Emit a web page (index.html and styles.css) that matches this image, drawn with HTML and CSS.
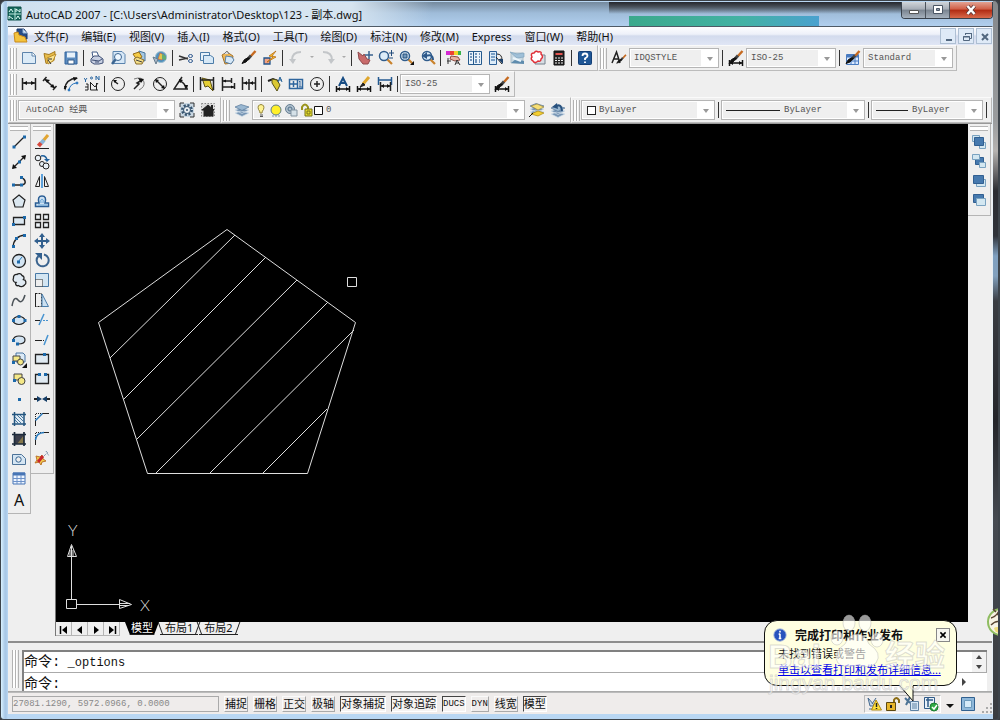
FILE: index.html
```html
<!DOCTYPE html>
<html lang="zh-CN">
<head>
<meta charset="utf-8">
<title>AutoCAD 2007</title>
<link rel="stylesheet" href="styles.css">
</head>
<body>
<svg class="defs" aria-hidden="true">
  <symbol id="brush" viewBox="0 0 16 16"><path d="M14.500 1 10 6" stroke="#c66a20" stroke-width="2.400"/><path d="M10 5.500 6.500 9.500" stroke="#444" stroke-width="3"/><path d="M8.500 8 5 12 1 13.500 3.500 9.500 6.500 8z" fill="#111" stroke="#111"/></symbol>
  <symbol id="dimline" viewBox="0 0 16 16"><path d="M1.500 10v6M14.500 10v6M2 13h12" stroke="#111" stroke-width="1.500"/><path d="M2 13l3-2v4zM14 13l-3-2v4z" fill="#111" stroke="none"/></symbol>
  <symbol id="layers" viewBox="0 0 16 16"><path d="M1 11l6-2 8 2-7 3.500zM1 8l6-2 8 2-7 3.500z" fill="#7896b5" stroke="#d5e2ee" stroke-width=".7"/><path d="M1 5l6-2.500 8 2.500-7 3.500z" fill="#99b7d1" stroke="#59789a" stroke-width=".7"/></symbol>
  <symbol id="lens" viewBox="0 0 16 16"><path d="M9.500 9.500 14 14" stroke="#c9822c" stroke-width="2.200"/><circle cx="6" cy="6" r="4.500" fill="#dcecf8" stroke="#315d8c" stroke-width="1.500"/></symbol>
</svg>
<div class="window">
  <header class="titlebar">
    <svg class="i" viewBox="0 0 16 16"><path d="M1 1h13v13H1z" fill="#16675c" stroke="#0c514b"/><path d="M2 8h12M8 2v12" stroke="#b9e7dc"/><path d="M2 6 4 3l2 3M9 6V3l4 3V3M2 13v-3l4 3M9 13l2-3 2 3" stroke="#e5fff9"/></svg>
    <h1>AutoCAD 2007 - [C:\Users\Administrator\Desktop\123 - 副本.dwg]</h1>
    <div class="winbtns">
      <button aria-label="最小化"><svg class="i" viewBox="0 0 16 16"><path d="M3.500 8.500h9v3h-9z" fill="#fff" stroke="#555"/></svg></button>
      <button aria-label="最大化"><svg class="i" viewBox="0 0 16 16"><path d="M3.500 3.500h9v8h-9z" fill="#fff" stroke="#4b5665"/><path d="M6.500 6.500h3v2h-3z" fill="#8b97a8" stroke="#4b5665"/></svg></button>
      <button class="close" aria-label="关闭"><svg class="i" viewBox="0 0 16 16"><path d="M4.500 4l7 8M11.500 4l-7 8" stroke="#5b3a3a" stroke-width="4"/><path d="M4.500 4l7 8M11.500 4l-7 8" stroke="#fff" stroke-width="2.400"/></svg></button>
    </div>
  </header>
  <div class="client">
    <nav class="menubar">
      <svg class="i" viewBox="0 0 16 16"><path d="M4 1h7l3 4v6H4z" fill="#274c86" stroke="#1a396d"/><path d="M10 1v4h4" fill="#d9e9fa" stroke="#8fb1d6"/><path d="M1 5l4-1 1 3 6 2 2 5H2z" fill="#f4c33d" stroke="#c98a1d"/></svg>
      <button>文件(F)</button><button>编辑(E)</button><button>视图(V)</button><button>插入(I)</button><button>格式(O)</button><button>工具(T)</button><button>绘图(D)</button><button>标注(N)</button><button>修改(M)</button><button>Express</button><button>窗口(W)</button><button>帮助(H)</button>
      <div class="mdi">
        <button aria-label="最小化文档"><svg class="i" viewBox="0 0 16 16"><path d="M5 11h6" stroke="#52677f" stroke-width="2"/></svg></button>
        <button aria-label="还原文档"><svg class="i" viewBox="0 0 16 16"><path d="M6.500 6V4.500h6v5H11M6 4.500h7M4.500 7.500h6v4h-6zM4 8h7" stroke="#52677f"/></svg></button>
        <button aria-label="关闭文档"><svg class="i" viewBox="0 0 16 16"><path d="M5 5l6 6M11 5l-6 6" stroke="#52677f" stroke-width="2"/></svg></button>
      </div>
    </nav>

    <div class="row">
      <div class="bar">
        <span class="grip"></span>
        <button class="tool" aria-label="新建"><svg class="i" viewBox="0 0 16 16"><path d="M1.500 2.500h10l3 3v8h-13z" fill="#dcebf7" stroke="#5e84ab"/><path d="M11 2.500v3.500h3.500" fill="#fff" stroke="#5e84ab"/></svg></button>
        <button class="tool" aria-label="打开"><svg class="i" viewBox="0 0 16 16"><path d="M2 3.500l5 1 6-3-1 9-8 3z" fill="#e9bd4a" stroke="#a57a20"/><path d="M5 8l9-4-3 7-5 3z" fill="#fbe594" stroke="#b98c29"/><path d="M6 10l3 4M6 9h4" stroke="#333"/></svg></button>
        <button class="tool" aria-label="保存"><svg class="i" viewBox="0 0 16 16"><path d="M2 2h12v12H2z" fill="#5c8cc0" stroke="#30639c"/><path d="M4 2.500h8v5H4z" fill="#e7f1fa" stroke="none"/><path d="M5 10h6v4H5z" fill="#fff" stroke="#375f8c"/></svg></button>
        <span class="sep"></span>
        <button class="tool" aria-label="打印"><svg class="i" viewBox="0 0 16 16"><path d="M4 7 3 2h5l2 5" fill="#fff" stroke="#405a87"/><path d="M2 9l3-3h5l4 3v4l-4 1H5l-3-2z" fill="#c8d0e2" stroke="#415176"/><path d="M3 10l7 1 3-2M6 12h4" stroke="#415176"/></svg></button>
        <button class="tool" aria-label="打印预览"><svg class="i" viewBox="0 0 16 16"><path d="M3 1.500h9l3 3v9H3z" fill="#d7e8f7" stroke="#5a83ad"/><circle cx="8" cy="7" r="3.500" fill="#eef7ff" stroke="#3c6591"/><path d="M5.500 9.500 2 14" stroke="#3c6591" stroke-width="2.500"/></svg></button>
        <button class="tool" aria-label="发布"><svg class="i" viewBox="0 0 16 16"><path d="M8 1l6 2v8l-6-2z" fill="#a5c7e2" stroke="#48759b"/><path d="M2 4l6-2 3 5-5 3z" fill="#f6cc45" stroke="#946b18"/><path d="M3 9l3-2 7 3-2 4H5z" fill="#f3dd87" stroke="#8a6c2b"/><path d="M5 10l6 2" stroke="#444"/></svg></button>
        <button class="tool" aria-label="三维 DWF"><svg class="i" viewBox="0 0 16 16"><circle cx="9" cy="7" r="5.500" fill="#4d91bd" stroke="#9cbacd"/><path d="M8 3l4 2-2 5-4-1z" fill="#e3c34d" stroke="#d25a40" stroke-width=".6"/><path d="M10 4l4 2v4l-4-1z" fill="#65ae73" stroke="none"/><path d="M1 7l5 2-2 5z" fill="#aab9c9" stroke="#667b8c"/></svg></button>
        <span class="sep"></span>
        <button class="tool" aria-label="剪切"><svg class="i" viewBox="0 0 16 16"><path d="M1 6l9 3M1 10l9-2" stroke="#333" stroke-width="1.500"/><ellipse cx="12.500" cy="6" rx="2" ry="1.500" stroke="#315a90"/><ellipse cx="12.500" cy="11" rx="2" ry="1.500" stroke="#315a90"/></svg></button>
        <button class="tool" aria-label="复制"><svg class="i" viewBox="0 0 16 16"><path d="M1.500 2.500h9v8h-9z" fill="#e6f1fa" stroke="#4c7ca8"/><path d="M4.500 5.500h7l3 2v6h-10z" fill="#d6e8f6" stroke="#4c7ca8"/></svg></button>
        <button class="tool" aria-label="粘贴"><svg class="i" viewBox="0 0 16 16"><path d="M2 5l5-3 6 4-1 7-7 1z" fill="#f0b755" stroke="#a5742c"/><path d="M6 6l6 1 2 3-3 4-6-2z" fill="#d6e8f7" stroke="#577fa6"/><path d="M4 4l3-3 2 3" fill="#ddd" stroke="#777"/></svg></button>
        <button class="tool" aria-label="特性匹配"><svg class="i"><use href="#brush"/></svg></button>
        <button class="tool" aria-label="块编辑器"><svg class="i" viewBox="0 0 16 16"><path d="M2 8h6v6H2z" fill="#f3a386" stroke="#24558b" stroke-width="1.300"/><path d="M14 1 7 6l4 1-6 5 9-5-4-1z" fill="#ffc329" stroke="#b66c15" stroke-width=".8"/></svg></button>
        <span class="sep"></span>
        <button class="tool" aria-label="放弃"><svg class="i" viewBox="0 0 16 16"><path d="M13 2C6 2 4 6 4 10" stroke="#c3c6c9" stroke-width="2"/><path d="M1 9h7l-3 5z" fill="#c3c6c9" stroke="none"/></svg></button>
        <span class="mini"></span>
        <button class="tool" aria-label="重做"><svg class="i" viewBox="0 0 16 16"><path d="M3 2c7 0 9 4 9 8" stroke="#c3c6c9" stroke-width="2"/><path d="M8 9h7l-4 5z" fill="#c3c6c9" stroke="none"/></svg></button>
        <span class="mini"></span>
        <span class="sep"></span>
        <button class="tool" aria-label="平移"><svg class="i" viewBox="0 0 16 16"><path d="M1 2l5 4 1-2 3 5 3 1-2 4H6L2 9z" fill="#c96b6b" stroke="#8e4a4d"/><path d="M12 1v8M8 5h8" stroke="#3b638e" stroke-width="1.500"/></svg></button>
        <button class="tool" aria-label="实时缩放"><svg class="i" viewBox="0 0 16 16"><use href="#lens"/><path d="M13.500 0v6M11 3h5M11 8h4" stroke="#234d7c"/></svg></button>
        <button class="tool" aria-label="窗口缩放"><svg class="i" viewBox="0 0 16 16"><use href="#lens"/><path d="M4 4h4v4H4z" fill="#7199be" stroke="#274e7a"/><path d="M15 11v4h-4z" fill="#111" stroke="none"/></svg></button>
        <button class="tool" aria-label="缩放上一个"><svg class="i" viewBox="0 0 16 16"><use href="#lens" x="1"/><path d="M13 10C13 4 9 5 5 6" stroke="#2c588a" stroke-width="2"/><path d="M2 6l5-4v7z" fill="#2c588a" stroke="none"/></svg></button>
        <span class="sep"></span>
        <button class="tool" aria-label="特性"><svg class="i" viewBox="0 0 16 16"><path d="M0 1h4v4H0z" fill="#d52ad2" stroke="none"/><path d="M4 1h4v4H4z" fill="#ec4034" stroke="none"/><path d="M8 1h4v4H8z" fill="#f4d227" stroke="none"/><path d="M12 1h3v4h-3z" fill="#38b34a" stroke="none"/><path d="M5 6l7 1 2 3-5 1-5-2z" fill="#e8b3a2" stroke="#8d4a42"/><path d="M2 8v6M1 11h4M9 15l2-5 3 5M10 13h3" stroke="#333"/></svg></button>
        <button class="tool" aria-label="设计中心"><svg class="i" viewBox="0 0 16 16"><path d="M1.500 1.500h13v13h-13z" fill="#e9f2fa" stroke="#255a8d"/><path d="M6.500 2v12" stroke="#255a8d"/><path d="M3 4h2M3 7h2M3 10h2M8 4h2M12 4h1M8 7h2M12 7h1M8 10h2M12 10h1M8 12h2M12 12h1" stroke="#4a76a5" stroke-width="1.500"/></svg></button>
        <button class="tool" aria-label="工具选项板"><svg class="i" viewBox="0 0 16 16"><path d="M1.500 1.500h7v13h-7z" fill="#ddecf8" stroke="#2c5f96"/><path d="M3 4h4M3 7h4M3 10h4" stroke="#5a86b5" stroke-width="1.500"/><path d="M9 4q5 0 5 6l-2-1M8 7l6 7" stroke="#222"/><path d="M10 9h5v5z" fill="#1e426b" stroke="none"/></svg></button>
        <button class="tool" aria-label="图纸集管理器"><svg class="i" viewBox="0 0 16 16"><path d="M2 3h12v10H2z" fill="#c7d8e2" stroke="#aebfc8"/><path d="M1 2l7 2 7-1v4L8 8z" fill="#9fc0d8" stroke="#7fa3bd" stroke-width=".7"/><path d="M2 13l5-4 8 2v3z" fill="#5f8cae" stroke="none"/><path d="M4 8l8 3" stroke="#eaf5fb" stroke-width="2"/></svg></button>
        <button class="tool" aria-label="标记集管理器"><svg class="i" viewBox="0 0 16 16"><path d="M5 5h10v9H5z" fill="#d7dde3" stroke="#77828e"/><path d="M3 11q-3-2-1-4-2-4 2-4 2-3 4-1 4-1 3 2 3 3 0 5 0 3-3 2-3 3-5 0z" fill="#fff" stroke="#e02f37" stroke-width="1.500"/></svg></button>
        <button class="tool" aria-label="快速计算器"><svg class="i" viewBox="0 0 16 16"><path d="M3 1h10v14H3z" fill="#222" stroke="#111"/><path d="M4.500 3h7v2h-7z" fill="#e35450" stroke="none"/><path d="M4 8h2M7 8h2M10 8h2M4 10.500h2M7 10.500h2M10 10.500h2M4 13h2M7 13h2M10 13h2" stroke="#eee"/></svg></button>
        <span class="sep"></span>
        <button class="tool" aria-label="帮助"><svg class="i" viewBox="0 0 16 16"><rect x="1.500" y="1.500" width="13" height="13" rx="1" fill="#1f5695" stroke="#143f76"/><path d="M5.500 6q0-2.500 2.500-2.500T10.500 6q0 1-2.500 2.500V10M8 11.500V13" stroke="#fff" stroke-width="1.800"/></svg></button>
      </div>
      <div class="bar">
        <span class="grip"></span>
        <button class="tool" aria-label="文字样式"><svg class="i" viewBox="0 0 16 16"><path d="M1 13 5.500 2l3.500 11M3 9h5" stroke="#222" stroke-width="1.500"/><use href="#brush" x="5" y="4" width="11" height="11"/></svg></button>
        <label class="combo w90"><select aria-label="文字样式"><option>IDQSTYLE</option></select></label>
        <span class="sep"></span>
        <button class="tool" aria-label="标注样式"><svg class="i" viewBox="0 0 16 16"><use href="#dimline"/><use href="#brush"/></svg></button>
        <label class="combo w90"><select aria-label="标注样式"><option>ISO-25</option></select></label>
        <span class="sep"></span>
        <button class="tool" aria-label="表格样式"><svg class="i" viewBox="0 0 16 16"><path d="M1.500 4.500h12v10h-12z" fill="#d9e9ff" stroke="#497bc0"/><path d="M2 6h11" stroke="#497bc0" stroke-width="3"/><path d="M2 11h11M6 5v9M10 5v9" stroke="#497bc0"/><use href="#brush"/></svg></button>
        <label class="combo w90"><select aria-label="表格样式"><option>Standard</option></select></label>
      </div>
    </div>

    <div class="row">
      <div class="bar">
        <span class="grip"></span>
        <button class="tool" aria-label="线性"><svg class="i" viewBox="0 0 16 16"><path d="M1.500 2v12M14.500 2v12M2 7h12" stroke-width="1.500"/><path d="M2 7l4-2v4zM14 7l-4-2v4z" fill="#111" stroke="none"/></svg></button>
        <button class="tool" aria-label="对齐"><svg class="i" viewBox="0 0 16 16"><path d="M4.500 1 1 5M14.500 10 11 14M3 3.500l9.500 8.500" stroke-width="1.500"/><path d="M3 3l5 1-3 3zM13 12l-5-1 3-3z" fill="#111" stroke="none"/></svg></button>
        <button class="tool" aria-label="弧长"><svg class="i" viewBox="0 0 16 16"><path d="M1.500 13Q3 3 14 2" stroke-width="1.500"/><path d="M1 10h3l-2 5zM10 1l5 1-4 3z" fill="#111" stroke="none"/><path d="M6 14Q7 8 13 7" stroke="#2874bd"/><circle cx="6" cy="14" r="1" fill="#2874bd" stroke="#2874bd"/><circle cx="14" cy="7" r="1" fill="#2874bd" stroke="#2874bd"/></svg></button>
        <button class="tool" aria-label="坐标"><svg class="i" viewBox="0 0 16 16"><path d="M2 8h2v6M1 11h3M1 14h3M6.500 6v8H14M7 7l4 4 3-4M12.500 7v7"/><path d="M0 2l1.500 2L3 2M1.500 4v2M12 0v4M12 0l3 4M15 0v4" stroke="#2664a0"/><circle cx="7.500" cy="2" r="1" stroke="#2664a0"/></svg></button>
        <span class="sep"></span>
        <button class="tool" aria-label="半径"><svg class="i" viewBox="0 0 16 16"><circle cx="8" cy="8" r="6.500"/><path d="M8 8 4 5" stroke-width="1.500"/><path d="M3 4l4 0-2 3z" fill="#111" stroke="none"/></svg></button>
        <button class="tool" aria-label="折弯"><svg class="i" viewBox="0 0 16 16"><path d="M3 3q8-3 10 3 1 5-5 8" stroke="#777"/><path d="M3 13l5-5-2-1 5-3" stroke-width="1.500"/><path d="M7 2l6 1-3 4z" fill="#111" stroke="none"/></svg></button>
        <button class="tool" aria-label="直径"><svg class="i" viewBox="0 0 16 16"><circle cx="8" cy="8" r="6.500"/><path d="M4 4l8 8" stroke-width="1.500"/><path d="M3 3l4 1-3 3zM13 13l-4-1 3-3z" fill="#111" stroke="none"/></svg></button>
        <button class="tool" aria-label="角度"><svg class="i" viewBox="0 0 16 16"><path d="M9 1 1 13h14M6 5q6 1 7 8" stroke-width="1.500"/><path d="M6 3l4 1-3 3zM11 9h4l-1 4z" fill="#111" stroke="none"/></svg></button>
        <span class="sep"></span>
        <button class="tool" aria-label="快速标注"><svg class="i" viewBox="0 0 16 16"><path d="M3 2l8 2 3 11-5-5-3 1z" fill="#e5ce35" stroke="#5d5114"/><path d="M1.500 1v13M14.500 1v13M2 4h12" stroke-width="1.500"/></svg></button>
        <button class="tool" aria-label="基线"><svg class="i" viewBox="0 0 16 16"><path d="M2.500 1v14M11.500 2v5M14.500 7v6M3 5h8M3 11h11" stroke-width="1.500"/><path d="M3 5l3-1.500v3zM14 11l-3-1.500v3z" fill="#111" stroke="none"/></svg></button>
        <button class="tool" aria-label="连续"><svg class="i" viewBox="0 0 16 16"><path d="M1.500 1v13M8 3v11M14.500 1v13M2 7h12" stroke-width="1.500"/><path d="M3 7l3-2v4zM9 7l3-2v4z" fill="#111" stroke="none"/></svg></button>
        <span class="sep"></span>
        <button class="tool" aria-label="快速引线"><svg class="i" viewBox="0 0 16 16"><path d="M1 5l5-2 5 2" stroke-width="2"/><path d="M5 3l5 1 3 5-3 6-5-8z" fill="#dac832" stroke="#55501a"/><path d="M11 6l2-5 2 5M12 4h3" stroke="#246197"/></svg></button>
        <button class="tool" aria-label="公差"><svg class="i" viewBox="0 0 16 16"><path d="M1.500 3.500h13v9h-13zM9.500 4v8M5.500 5v6M2 8h7" stroke="#2e659d" stroke-width="1.500"/><path d="M11 6l1-1v6M11 11h3" stroke="#2e659d"/></svg></button>
        <button class="tool" aria-label="圆心标记"><svg class="i" viewBox="0 0 16 16"><circle cx="8" cy="8" r="6.500"/><path d="M8 5v6M5 8h6" stroke-width="1.500"/></svg></button>
        <span class="sep"></span>
        <button class="tool" aria-label="编辑标注"><svg class="i" viewBox="0 0 16 16"><path d="M4 10 8 2l4 8M6 7h4" stroke="#174c83" stroke-width="2"/><use href="#dimline"/></svg></button>
        <button class="tool" aria-label="编辑标注文字"><svg class="i" viewBox="0 0 16 16"><path d="M13 1 7 8" stroke="#dfa72d" stroke-width="3"/><path d="M7 7l-3 4 5-2z" fill="#222" stroke="#222"/><use href="#dimline"/></svg></button>
        <button class="tool" aria-label="标注更新"><svg class="i" viewBox="0 0 16 16"><path d="M1.500 1v8M14.500 1v8M2 4h12" stroke="#245a91" stroke-width="1.500"/><path d="M3.500 6v9M13.500 6v9M4 10h9" stroke-width="1.500"/><path d="M4 10l3-2v4zM13 10l-3-2v4z" fill="#111" stroke="none"/></svg></button>
        <span class="sep"></span>
        <label class="combo w90"><select aria-label="标注样式控制"><option>ISO-25</option></select></label>
        <button class="tool" aria-label="标注样式管理"><svg class="i" viewBox="0 0 16 16"><use href="#dimline"/><use href="#brush"/></svg></button>
      </div>
    </div>

    <div class="row">
      <div class="bar">
        <span class="grip"></span>
        <label class="combo w157"><select aria-label="工作空间"><option>AutoCAD 经典</option></select></label>
        <button class="tool" aria-label="工作空间设置"><svg class="i" viewBox="0 0 16 16"><path d="M1 1h14v14H1z" fill="#c9d7e2" stroke="none"/><path d="M1 5V1h4M11 1h4v4M15 11v4h-4M5 15H1v-4" stroke="#333"/><circle cx="8" cy="8" r="4.500" stroke="#35536f" stroke-width="3" stroke-dasharray="2 1.500"/><circle cx="8" cy="8" r="3.500" fill="#e9eef2" stroke="#35536f"/><circle cx="8" cy="8" r="1" fill="#35536f" stroke="none"/></svg></button>
        <button class="tool" aria-label="我的工作空间"><svg class="i" viewBox="0 0 16 16"><path d="M1.500 1.500h13v13h-13z" fill="#ddd" stroke="#888" stroke-dasharray="1.500 1.500"/><path d="M2 8l6-5 6 5h-1v6H4V8z" fill="#222" stroke="#222"/><path d="M12 3v4" stroke="#222" stroke-width="2"/></svg></button>
      </div>
      <div class="bar grow">
        <span class="grip"></span>
        <button class="tool" aria-label="图层特性管理器"><svg class="i"><use href="#layers"/></svg></button>
        <label class="combo grow">
          <svg class="layerstate" viewBox="0 0 76 16"><path d="M6 11q0-2-1.500-3.500Q3 3 7 2.500 11 3 9.500 7.500 8 9 8 11z" fill="#fff391" stroke="#92843a"/><path d="M6 13h3M6 14.500h3" stroke="#555"/><circle cx="22" cy="8" r="5" fill="#fff02a" stroke="#5b7b8b"/><path d="M18 14h8" stroke="#7b98ab" stroke-dasharray="2 1"/><circle cx="36" cy="7" r="4.500" fill="#aebfcc" stroke="#687f93"/><circle cx="36" cy="7" r="2" stroke="#52718b"/><path d="M37 8h6v6h-6z" fill="#d5e1e8" stroke="#8293a0"/><path d="M48 8V5q3-5 6 0v5" stroke="#9a941d" stroke-width="2"/><path d="M51 7h7v7h-7z" fill="#e9df30" stroke="#77721b"/><path d="M53 9h3v3h-3z" stroke="#77721b"/><path d="M60.500 4.500h8v8h-8z" fill="#fff" stroke="#111"/></svg>
          <select aria-label="图层"><option>0</option></select></label>
        <button class="tool" aria-label="置为当前图层"><svg class="i" viewBox="0 0 16 16"><use href="#layers" y="-1"/><path d="M2 12l7 2 6-3-6-2z" fill="#f4cf30" stroke="#aa8713" stroke-width=".7"/><path d="M0 15l4-4" stroke="#111"/><path d="M2 4l6-2 7 3-6 3z" fill="#f6df75" stroke="#9a8744" stroke-width=".7"/></svg></button>
        <button class="tool" aria-label="上一个图层"><svg class="i" viewBox="0 0 16 16"><use href="#layers" y="1"/><path d="M5 5q6-5 7 4" stroke="#28517e" stroke-width="2"/><path d="M2 5l5-4 1 6z" fill="#28517e" stroke="none"/></svg></button>
      </div>
      <div class="bar">
        <span class="grip"></span>
        <label class="combo w134"><span class="swatch"></span><select aria-label="颜色"><option>ByLayer</option></select></label>
        <span class="sep"></span>
        <label class="combo w144"><span class="ltype"></span><select aria-label="线型"><option>ByLayer</option></select></label>
        <span class="sep"></span>
        <label class="combo w112"><span class="ltype short"></span><select aria-label="线宽"><option>ByLayer</option></select></label>
        <span class="sep"></span>
      </div>
    </div>

    <main class="work">
      <div class="vbar long">
        <span class="hgrip"></span>
        <button class="tool" aria-label="直线"><svg class="i" viewBox="0 0 16 16"><path d="M3 13 13 3" stroke-width="1.300"/><path class="n" d="M1.500 11.500h3v3h-3zM12 1.500h3v3h-3z"/></svg></button>
        <button class="tool" aria-label="构造线"><svg class="i" viewBox="0 0 16 16"><path d="M2 14 14 2" stroke-width="1.300"/><path d="M1 15l1-5 4 4zM15 1l-1 5-4-4z" fill="#111" stroke="none"/><path class="n" d="M7 6.500h3v3H7z"/></svg></button>
        <button class="tool" aria-label="多段线"><svg class="i" viewBox="0 0 16 16"><path d="M2 12h9q4-1 3-4-1-3-4-3" stroke-width="1.500"/><path class="n" d="M1 10.500h3v3H1zM9 10.500h3v3H9zM9 3h3v3H9z"/></svg></button>
        <button class="tool" aria-label="正多边形"><svg class="i" viewBox="0 0 16 16"><path d="M8 2l6 5-2 7H4L2 7z" fill="#dbe7f0" stroke-width="1.200"/></svg></button>
        <button class="tool" aria-label="矩形"><svg class="i" viewBox="0 0 16 16"><path d="M2.500 4.500h11v7h-11z" fill="#dbe7f0" stroke-width="1.300"/><path class="n" d="M1 10h3v3H1zM12 3h3v3h-3z"/></svg></button>
        <button class="tool" aria-label="圆弧"><svg class="i" viewBox="0 0 16 16"><path d="M2 14Q3 3 14 2" stroke-width="1.300"/><path class="n" d="M1 12h3v3H1zM4 4h3v3H4zM12 1h3v3h-3z"/></svg></button>
        <button class="tool" aria-label="圆"><svg class="i" viewBox="0 0 16 16"><circle cx="8" cy="8" r="6.500" fill="#d3e4f2" stroke-width="1.300"/><path d="M7 9l4-5" stroke="#217abe"/><path class="n" d="M6 7.500h3v3H6z"/></svg></button>
        <button class="tool" aria-label="修订云线"><svg class="i" viewBox="0 0 16 16"><path d="M5 10.500A3 3 0 0 1 2.500 6 3 3 0 0 1 6 2.500a3 3 0 0 1 5 1 2.500 2.500 0 0 1 1.500 4 3 3 0 0 1 1 5.500 4 4 0 0 1-6 .5 2 2 0 0 1-2.500-3z" fill="#dfe9f2" stroke-width="1.300"/></svg></button>
        <button class="tool" aria-label="样条曲线"><svg class="i" viewBox="0 0 16 16"><path d="M1 14Q3 3 7 8t7-5" stroke="#4b5258" stroke-width="1.500"/></svg></button>
        <button class="tool" aria-label="椭圆"><svg class="i" viewBox="0 0 16 16"><ellipse cx="8" cy="8.500" rx="6" ry="4" fill="#d3e4f2" stroke-width="1.200"/><path class="n" d="M1 7h3v3H1zM6.500 3h3v3h-3zM12.500 7h3v3h-3z"/></svg></button>
        <button class="tool" aria-label="椭圆弧"><svg class="i" viewBox="0 0 16 16"><path d="M2 8q1-4 6-4 6 0 6 4t-7 4" fill="#d3e4f2" stroke-width="1.200"/><path class="n" d="M1 7h3v3H1zM5 10.500h3v3H5z"/></svg></button>
        <button class="tool" aria-label="插入块"><svg class="i" viewBox="0 0 16 16"><path d="M5 1h7l2 2v7H5z" fill="#dceaf6" stroke="#4b77a4"/><path d="M2 4h7v5H2z" fill="#f4e887" stroke="#444"/><circle cx="9.500" cy="10" r="3" fill="#f4e887" stroke="#444"/><path class="n" d="M1 9h3v3H1z"/><path d="M16 11v5h-5z" fill="#111" stroke="none"/></svg></button>
        <button class="tool" aria-label="创建块"><svg class="i" viewBox="0 0 16 16"><path d="M3 3h8v6H3z" fill="#f4e887" stroke="#444"/><circle cx="10.500" cy="10" r="3.500" fill="#f4e887" stroke="#444"/><path class="n" d="M2 8h3v3H2z"/></svg></button>
        <button class="tool" aria-label="点"><svg class="i" viewBox="0 0 16 16"><path class="n" d="M7 7h3v3H7z"/></svg></button>
        <button class="tool" aria-label="图案填充"><svg class="i" viewBox="0 0 16 16"><path d="M4 4h9v9H4z" fill="#e0ebf4" stroke="none"/><path d="M3.500 1v14M13 1v14M1 3.500h14M1 13h14" stroke="#24567f" stroke-width="1.500"/><path d="M4 6l7 7M4 9l4 4M6 4l7 7M9 4l4 4" stroke="#47779c"/></svg></button>
        <button class="tool" aria-label="渐变色"><svg class="i" viewBox="0 0 16 16"><path d="M4 4h9v9H4z" fill="#3c3f4c" stroke="none"/><path d="M6 13l7-9v9z" fill="#85784c" stroke="none"/><path d="M3.500 1v14M13 1v14M1 3.500h14M1 13h14" stroke="#1d2b3b" stroke-width="1.700"/></svg></button>
        <button class="tool" aria-label="面域"><svg class="i" viewBox="0 0 16 16"><path d="M1.500 3.500h9l4 4v6h-13z" fill="#d5e5f2" stroke="#4c7298"/><circle cx="7.500" cy="8.500" r="2.700" fill="#eee" stroke="#356493"/></svg></button>
        <button class="tool" aria-label="表格"><svg class="i" viewBox="0 0 16 16"><path d="M2 3h12v11H2z" fill="#eef5ff" stroke="#4775b5"/><path d="M2 4h12" stroke="#4775b5" stroke-width="3"/><path d="M2 8.500h12M2 11.500h12M6 5v9M10 5v9" stroke="#6d91c8"/></svg></button>
        <button class="tool letter">A</button>
      </div>
      <div class="vbar mid">
        <span class="hgrip"></span>
        <button class="tool" aria-label="删除"><svg class="i" viewBox="0 0 16 16"><path d="M14 1 9 7" stroke="#e2a532" stroke-width="3"/><path d="M10 6l-3 3.500" stroke="#8ab5d8" stroke-width="4"/><path d="M7 9l-2.500 3" stroke="#d6483d" stroke-width="4"/><path d="M1 14.500h14"/></svg></button>
        <button class="tool" aria-label="复制对象"><svg class="i" viewBox="0 0 16 16"><circle cx="4" cy="4" r="2.800" fill="#e9f0f6"/><circle cx="8" cy="10" r="2.500" fill="#e9f0f6"/><circle cx="12" cy="12" r="3" fill="#e9f0f6"/><path d="M7 2q5-1 6 4" stroke="#1e5f9b" stroke-width="1.500"/><path d="M10 5h6l-3 3z" fill="#1e5f9b" stroke="none"/></svg></button>
        <button class="tool" aria-label="镜像"><svg class="i" viewBox="0 0 16 16"><path d="M1.500 13.500h4v-10zM14.500 13.500h-4v-10z"/><path d="M8 1v14" stroke="#5da1da" stroke-width="2"/></svg></button>
        <button class="tool" aria-label="偏移"><svg class="i" viewBox="0 0 16 16"><path d="M1.500 13.500h13V10H11q2-7-3-7T5 10H1.500z" fill="#cfe2f2" stroke="#2a5d94" stroke-width="1.500"/><path d="M4 12h9M7 10q-1-4 1-4t1 4" stroke="#67a4d7"/></svg></button>
        <button class="tool" aria-label="阵列"><svg class="i" viewBox="0 0 16 16"><path d="M1.500 1.500h5v5h-5zM9.500 1.500h5v5h-5zM1.500 9.500h5v5h-5zM9.500 9.500h5v5h-5z" fill="#eef3f7" stroke-width="1.300"/></svg></button>
        <button class="tool" aria-label="移动"><svg class="i" viewBox="0 0 16 16"><path d="M8 2v12M2 8h12" stroke="#315f8e" stroke-width="2"/><path d="M8 0l3 4H5zM8 16l3-4H5zM0 8l4-3v6zM16 8l-4-3v6z" fill="#315f8e" stroke="none"/></svg></button>
        <button class="tool" aria-label="旋转"><svg class="i" viewBox="0 0 16 16"><path d="M4.500 4A6 6 0 1 0 10 2.500" stroke="#3a638e" stroke-width="2"/><path d="M1 1h7v7z" fill="#315f8e" stroke="none"/></svg></button>
        <button class="tool" aria-label="缩放"><svg class="i" viewBox="0 0 16 16"><path d="M1.500 1.500h13v13h-13z" fill="#d3e5f2" stroke="#4779a7"/><path d="M1.500 7.500h7v7h-7z" fill="#eee" stroke="#222" stroke-dasharray="1 1"/></svg></button>
        <button class="tool" aria-label="拉伸"><svg class="i" viewBox="0 0 16 16"><path d="M1.500 1.500h6v13h-6z" fill="#eee" stroke-dasharray="2 1"/><path d="M8 2l6.500 12.500H8z" fill="#cde1f1" stroke="#4b7eac"/><path d="M1.500 1v14"/></svg></button>
        <button class="tool" aria-label="修剪"><svg class="i" viewBox="0 0 16 16"><path d="M1 8.500h5"/><path d="M5 13 10 2" stroke="#4793d0" stroke-width="1.500"/><path d="M9 8.500h6" stroke="#4793d0" stroke-dasharray="2 1"/></svg></button>
        <button class="tool" aria-label="延伸"><svg class="i" viewBox="0 0 16 16"><path d="M1 8.500h5"/><path d="M6 8.500h4" stroke-dasharray="2 1"/><path d="M10 13 14 3" stroke="#4793d0" stroke-width="1.500"/></svg></button>
        <button class="tool" aria-label="打断于点"><svg class="i" viewBox="0 0 16 16"><path d="M1.500 3.500h13v9h-13z" fill="#e0eaf2" stroke-width="1.300"/><path class="n" d="M9 2h3v3H9z"/></svg></button>
        <button class="tool" aria-label="打断"><svg class="i" viewBox="0 0 16 16"><path d="M4 3.500H1.500v9h13v-9H12" fill="#e0eaf2" stroke-width="1.300"/><path class="n" d="M4 2h3v3H4zM10 2h3v3h-3z"/></svg></button>
        <button class="tool" aria-label="合并"><svg class="i" viewBox="0 0 16 16"><path d="M0 8h4M12 8h4" stroke-width="2"/><path d="M3 5l5 3-5 3zM13 5 8 8l5 3z" fill="#173f68" stroke="none"/></svg></button>
        <button class="tool" aria-label="倒角"><svg class="i" viewBox="0 0 16 16"><path d="M1.500 15V9M9 2.500h6"/><path d="M1.500 8V2.500H9" stroke-dasharray="1 1"/><path d="M1.500 9.500l7-7" stroke="#2879bb" stroke-width="1.500"/></svg></button>
        <button class="tool" aria-label="圆角"><svg class="i" viewBox="0 0 16 16"><path d="M1.500 15V9M9 2.500h6"/><path d="M1.500 8V2.500H9" stroke-dasharray="1 1"/><path d="M1.500 10Q2 3 10 2.500" stroke="#2879bb" stroke-width="1.500"/></svg></button>
        <button class="tool" aria-label="分解"><svg class="i" viewBox="0 0 16 16"><path d="M2 6l4 1 2-2 1 4 3 2-4 1-1 3-2-3-4 1 2-3z" fill="#f3cf4d" stroke="#bd752c"/><path d="M9 6l-5 6" stroke="#c9272c" stroke-width="3"/><path d="M10 6l4-4M12 1l3 5" stroke="#587798" stroke-dasharray="1 1"/></svg></button>
      </div>
      <div class="document">
        <div class="canvas">
          <svg class="drawing" role="img" aria-label="图案填充的五边形"><path d="M171 105.500 299.500 198.500 251.500 349.500H91.500L42.500 198.500z"/><path d="M179 111 54 234M210 133 68 275M241 156 81 315M272 178 100 349M298 206 154 349M271 285 207 349"/><path d="M291.500 153.500h9v9h-9z"/></svg>
          <svg class="ucs" viewBox="0 -10 110 110"><path d="M10.500 77.500h10v9h-10zM15.500 77V35M21 82.500h43M15.500 22.500l-4 12h9zM63.500 77.500v9l12-4zM15.500 24v10M14 28v6M17 28v6M64 81.500h10M64 83.500h8"/><text x="12" y="14">Y</text><text x="84" y="89">X</text></svg>
        </div>
        <div class="tabs">
          <div class="tabnav">
            <button aria-label="第一个"><svg class="i" viewBox="0 0 16 16"><path d="M4.500 4v8" stroke="#000" stroke-width="1.500"/><path d="M11 4v8L6 8z" fill="#000" stroke="none"/></svg></button>
            <button aria-label="上一个"><svg class="i" viewBox="0 0 16 16"><path d="M10 4v8L5 8z" fill="#000" stroke="none"/></svg></button>
            <button aria-label="下一个"><svg class="i" viewBox="0 0 16 16"><path d="M6 4v8l5-4z" fill="#000" stroke="none"/></svg></button>
            <button aria-label="最后一个"><svg class="i" viewBox="0 0 16 16"><path d="M11.500 4v8" stroke="#000" stroke-width="1.500"/><path d="M5 4v8l5-4z" fill="#000" stroke="none"/></svg></button>
          </div>
          <button class="tab active">模型</button><button class="tab">布局1</button><button class="tab">布局2</button>
        </div>
      </div>
      <aside class="side">
        <div class="vbar order">
          <span class="hgrip"></span>
          <button class="tool" aria-label="前置"><svg class="i" viewBox="0 0 16 16"><path d="M1.500 1.500h7v6h-7zM8.500 8.500h6v6h-6z" fill="#d3e7f1" stroke="#7aa2c0"/><path d="M3.500 3.500h9v8h-9z" fill="#4679ae" stroke="#315f91"/></svg></button>
          <button class="tool" aria-label="后置"><svg class="i" viewBox="0 0 16 16"><path d="M4.500 4.500h8v7h-8z" fill="#4679ae" stroke="#315f91"/><path d="M1.500 1.500h7v5h-7zM8.500 9.500h6v5h-6z" fill="#d3e7f1" stroke="#7aa2c0"/></svg></button>
          <button class="tool" aria-label="置于对象之上"><svg class="i" viewBox="0 0 16 16"><path d="M5.500 6.500h9v7h-9z" fill="#d3e7f1" stroke="#7aa2c0"/><path d="M2.500 2.500h10v8h-10z" fill="#4679ae" stroke="#315f91"/></svg></button>
          <button class="tool" aria-label="置于对象之下"><svg class="i" viewBox="0 0 16 16"><path d="M2.500 2.500h10v8h-10z" fill="#4679ae" stroke="#315f91"/><path d="M5.500 6.500h9v7h-9z" fill="#d3e7f1" stroke="#7aa2c0"/></svg></button>
        </div>
      </aside>
    </main>

    <section class="command">
      <span class="grip"></span>
      <div class="console">
        <div class="line history"><p><span class="cn">命令:</span> _options</p><div class="spin"><button class="up" aria-label="向上"></button><button class="down" aria-label="向下"></button></div></div>
        <div class="line"><label class="cn" for="cmd">命令:</label><input id="cmd" type="text"><button class="right" aria-label="向右"></button></div>
      </div>
    </section>

    <footer class="status">
      <output>27081.1290, 5972.0966, 0.0000</output>
      <button>捕捉</button><button>栅格</button><button>正交</button><button>极轴</button><button class="on">对象捕捉</button><button class="on">对象追踪</button><button class="on mono">DUCS</button><button class="mono">DYN</button><button>线宽</button><button class="on">模型</button>
      <div class="tray">
        <svg class="i" viewBox="0 0 16 16"><path d="M2 2l7 8H4zM3 13h6M6 8l4-6" fill="#c9d8e8" stroke="#43688f"/><path d="M10 4l5.500 10h-10z" fill="#ffe13c" stroke="#b18b16"/><path d="M10.500 7v4M10.500 12v1" stroke-width="1.500"/></svg>
        <svg class="i" viewBox="0 0 16 16"><path d="M9 7V4q2-4 5 0v3" stroke="#8b6c13" stroke-width="2"/><path d="M1.500 6.500h9v8h-9z" fill="#e7b52b" stroke="#5d4810"/><path d="M6 9v3" stroke="#222" stroke-width="2"/></svg>
        <svg class="i" viewBox="0 0 16 16"><path d="M1 2l5 5M6 1 2 9" stroke="#4d7395" stroke-width="2"/><path d="M6.500 5.500h8v9h-8z" fill="#d8e8f5" stroke="#5d81a3"/><path d="M8 8h5M8 10h5M8 12h5" stroke="#5d81a3"/></svg>
        <svg class="i" viewBox="0 0 16 16"><path d="M1.500 1.500h10v11h-10z" fill="#e8f0f8" stroke="#315b88"/><path d="M3 4h7M5 2v9" stroke="#315b88" stroke-width="1.500"/><circle cx="11" cy="11" r="4" fill="#2faa43" stroke="#1c7b30"/><path d="M9 11l2 2 3-4" stroke="#fff" stroke-width="1.500"/></svg>
      </div>
      <button class="drop" aria-label="状态栏菜单"></button>
      <button class="tool" aria-label="全屏显示"><svg class="i" viewBox="0 0 16 16"><path d="M1.500 1.500h13v13h-13z" fill="#8fb8da" stroke="#31608f"/><path d="M4.500 4.500h7v7h-7z" fill="#d5eaf8" stroke="#6c9abc"/></svg></button>
      <svg class="sizer" viewBox="0 0 10 12"><path d="M8 2h2M8 6h2M4 6h2M8 10h2M4 10h2M0 10h2" stroke="#aaa" stroke-width="2"/></svg>
    </footer>
  </div>

  <aside class="balloon">
    <svg class="tail" viewBox="0 0 20 20"><path d="M1 0 14 16 14 0z" fill="#ffffe1" stroke="none"/><path d="M1 1 14 16 14 1" stroke="#111" fill="none"/></svg>
    <header><svg class="i" viewBox="0 0 16 16"><circle cx="8" cy="8" r="7" fill="#2853bd" stroke="#8fa6d8"/><path d="M8 3v2M8 6.500V12M6.500 12h3M6.500 7H8" stroke="#fff" stroke-width="1.800"/></svg><h2>完成打印和作业发布</h2><button aria-label="关闭通知"><svg class="i" viewBox="0 0 16 16"><path d="M4.500 4.500l7 7M11.500 4.500l-7 7" stroke="#000" stroke-width="2"/></svg></button></header>
    <p>未找到错误或警告</p>
    <a href="#report">单击以查看打印和发布详细信息...</a>
  </aside>
  <svg class="mark" viewBox="0 0 184 90"><ellipse cx="82" cy="10" rx="6" ry="8"/><ellipse cx="98" cy="10" rx="6" ry="8"/><ellipse cx="70" cy="25" rx="6" ry="7"/><ellipse cx="110" cy="27" rx="6" ry="7"/><path d="M90 21q8 0 12 10 14 9 7 19-6 6-19 2-13 4-19-2-7-10 7-19 4-10 12-10z"/><text x="1" y="55" class="big">Bai</text><text x="118" y="53" class="cnm">经验</text><text x="2" y="77" class="url">jingyan.baidu.com</text></svg>
  <svg class="pet" viewBox="0 0 14 32"><circle cx="15" cy="17" r="13" fill="#f7f3e3" stroke="#8fbd62" stroke-width="2"/><path d="M5 13q5-1 8-7M5 20q5-5 9-3M7 4l3 3M11 10l3-4" stroke="#5a4632" stroke-width="1.500"/><path d="M8 23q3-2 6 0v5q-5 0-6-5z" fill="#eedb7a" stroke="none"/></svg>
</div>
</body>
</html>
```
FILE: styles.css
```css
* { box-sizing: border-box; }
body { margin: 0; background: #3a3c40; }
.defs { position: absolute; width: 0; height: 0; }
button, select, input { font: inherit; color: inherit; margin: 0; padding: 0; border: 0; background: none; border-radius: 0; }
h1, h2, p { margin: 0; font-weight: normal; }
.i { width: 16px; height: 16px; flex: none; display: block; fill: none; stroke: #222; }
.n { fill: #1c69aa; stroke: none; }

.window {
  position: relative; height: 100vh; display: flex; flex-direction: column;
  padding: 1px 5px 5px 6px; overflow: hidden;
  border: 1px solid #3d444b; border-right-width: 2px; border-radius: 6px 6px 4px 4px;
  background:
    linear-gradient(90deg, #d9f1ff, #a9c8e6 4px, #a9c8e6 5px, transparent 7px) left / 8px 100% no-repeat,
    linear-gradient(#85888b, #9a9c9e 120px, #b6b3b1 150px, #2b2c31 190px, #30333a 235px, #7fa0c0 255px, #82a0bd 275px, #3a3d43 300px, #24252a 420px, #454a51 520px, #393c40) right / 5px 100% no-repeat,
    #b9d7f3;
  font: 11px "Noto Sans", "Noto Sans CJK SC", sans-serif; color: #111;
}
.titlebar {
  height: 24px; flex: none; display: flex; align-items: center; gap: 3px;
  background:
    linear-gradient(90deg, #3ba98c, #43b2a4 60%, #4aa1cf) 622px 14px / 190px 10px no-repeat,
    linear-gradient(#25272d, rgba(60, 65, 72, .8) 5px, rgba(150, 175, 200, 0) 12px) 602px 0 / 600px 12px no-repeat,
    linear-gradient(100deg, #cfe0ef 0, #d8e7f4 120px, #d6e4f0 340px, rgba(160, 190, 220, 0) 420px),
    linear-gradient(#74899d, #9fbcd9 11px, #b1cfee);
}
.titlebar h1 { font-size: 11px; white-space: nowrap; }
.winbtns { margin-left: auto; align-self: flex-start; display: flex; border: 1px solid #39414c; border-top: 0; border-radius: 0 0 4px 4px; overflow: hidden; }
.winbtns button { width: 24px; height: 16px; display: grid; place-items: center; background: linear-gradient(#d0d4d9, #a5acb6 45%, #79838f 50%, #a6b1bd); border-right: 1px solid #4b535d; }
.winbtns .close { width: 42px; border: 0; background: linear-gradient(#e2a393, #cf5d45 45%, #b02a12 50%, #d8694a); }

.client { flex: 1; min-height: 0; display: flex; flex-direction: column; margin-left: 1px; background: #efefef; border-top: 1px solid #4f5a66; border-right: 1px solid #e7eff5; }
.menubar { height: 18px; flex: none; display: flex; align-items: center; gap: 13px; padding-left: 5px; background: linear-gradient(#fdfdff, #eef1f9 40%, #d3dbed 50%, #e0e6f5); }
.menubar > .i { margin-right: -8px; }
.menubar > button { white-space: nowrap; }
.mdi { margin-left: auto; display: flex; gap: 2px; }
.mdi button { width: 16px; height: 16px; display: grid; place-items: center; background: #dfeaf7; border: 1px solid #aebfd3; }

.row { height: 26px; flex: none; display: flex; background: #efefef; }
.bar { display: flex; align-items: center; height: 26px; border: 1px solid #fafafa; border-right: 1px solid #b9b9b9; border-bottom: 1px solid #bcbcbc; padding: 0 2px 0 1px; }
.grow { flex: 1; min-width: 0; }
.grip { width: 7px; height: 21px; flex: none; margin-right: 1px; border: 1px solid #b3b3b3; border-width: 0 1px; background: linear-gradient(90deg, #fff 2px, #b3b3b3 2px, #b3b3b3 3px, #fff 3px, #fff 4px, transparent 4px); }
.tool { width: 21px; height: 19px; flex: none; display: grid; place-items: center; }
.sep { width: 1px; height: 16px; flex: none; margin: 0 2px; background: #333; }
.mini { width: 11px; display: grid; place-items: center; }
.mini::before { content: ""; border: 2px solid transparent; border-top-color: #aaa; }
.combo { height: 20px; display: flex; align-items: center; border: 1px solid #b5b5b5; background: #efefef; box-shadow: inset 0 0 0 1px #fff; position: relative; padding-left: 4px; margin-right: 1px; }
.combo::after { content: ""; position: absolute; right: 1px; top: 1px; bottom: 1px; width: 16px; pointer-events: none; background: #fff; }
.combo::before { content: ""; position: absolute; z-index: 1; right: 5px; top: 8px; border: 3px solid transparent; border-top: 4px solid #999; border-bottom: 0; pointer-events: none; }
.combo select { appearance: none; flex: 1; min-width: 0; height: 18px; color: #555; font: 9px "Liberation Mono", "Noto Sans CJK SC", monospace; }
.w90 { width: 90px; }
.w134 { width: 134px; }
.w144 { width: 144px; }
.w112 { width: 112px; }
.w157 { width: 157px; }
.w157 select { padding-left: 3px; }
.layerstate { width: 76px; height: 16px; flex: none; margin: 0 -4px 0 -3px; fill: none; }
.swatch { width: 9px; height: 9px; margin: 0 3px 0 1px; border: 1px solid #222; background: #fff; }
.ltype { width: 54px; height: 1px; margin-right: 4px; background: #222; }
.ltype.short { width: 32px; }

.work { flex: 1; min-height: 0; display: flex; border-top: 1px solid #999; }
.vbar { width: 23px; padding-bottom: 5px; display: grid; grid-auto-rows: 1fr; grid-template-rows: 8px; justify-items: center; align-items: center; align-self: flex-start; border-right: 1px solid #b5b5b5; border-bottom: 1px solid #b5b5b5; }
.long { height: 390px; }
.mid { height: 350px; margin-right: 1px; }
.order { height: 92px; }
.hgrip { width: 18px; height: 5px; border: 1px solid #b5b5b5; border-width: 1px 0; background: #fff; }
.letter { font: 16px "Noto Sans", sans-serif; }
.document { flex: 1; min-width: 0; display: flex; flex-direction: column; border-left: 1px solid #777; }
.canvas { flex: 1; min-height: 0; position: relative; background: #000; overflow: hidden; }
.canvas svg { fill: none; stroke: #dedede; stroke-width: 1; }
.drawing { width: 100%; height: 100%; display: block; }
.ucs { position: absolute; left: 0; bottom: 0; width: 110px; height: 110px; }
.ucs text { font: 300 16px Lato, sans-serif; fill: #dedede; stroke: none; }
.tabs { height: 14px; flex: none; display: flex; background: #efefef; }
.tabnav { display: flex; margin-right: 5px; }
.tabnav button { width: 16px; height: 14px; display: grid; place-items: center; border-right: 1px solid #b5b5b5; border-bottom: 1px solid #b5b5b5; }
.tab { position: relative; height: 13px; line-height: 12px; padding: 0 5px; margin-right: 1px; border-bottom: 1px solid #222; white-space: nowrap; }
.tab::before, .tab::after { content: ""; position: absolute; top: 0; bottom: -1px; width: 1px; background: #222; }
.tab::before { left: 0; transform: skewX(20deg); }
.tab::after { right: 0; transform: skewX(-20deg); }
.active { padding: 0 6px; background: #000; color: #fff; clip-path: polygon(0 0, 100% 0, calc(100% - 5px) 100%, 5px 100%); }
.side { width: 24px; flex: none; }

.command { flex: none; display: flex; margin-top: 5px; padding: 7px 5px 0 4px; border-top: 2px solid #8d8d8d; border-bottom: 1px solid #aaa; }
.command .grip { height: 38px; margin-right: 3px; }
.console { flex: 1; min-width: 0; border: 2px solid #808080; border-width: 2px 0 0 2px; font: 12px "Liberation Mono", monospace; }
.line { display: flex; align-items: center; height: 18px; background: #fff; }
.history { height: 21px; padding-bottom: 5px; border-bottom: 1px solid #aaa; }
.history p { flex: 1; white-space: pre; }
.cn { font: 14px "Liberation Mono", "Noto Sans CJK SC", monospace; }
.line input { flex: 1; min-width: 0; outline: 0; }
.spin { width: 15px; height: 20px; margin-bottom: -5px; display: flex; flex-direction: column; justify-content: space-around; align-items: center; background: #f2f2f2; border-right: 1px solid #aaa; }
.spin button { border: 3px solid transparent; }
.spin .up { border-bottom: 4px solid #444; border-top: 0; }
.spin .down { border-top: 4px solid #444; border-bottom: 0; }
.right { border: 4px solid transparent; border-left: 4px solid #444; border-right: 0; margin-right: 21px; }

.status { flex: none; height: 22px; display: flex; align-items: center; gap: 5px; padding-left: 4px; border-top: 1px solid #bbb; background: #efeceb; }
.status output { width: 207px; height: 16px; border: 1px solid #aaa; font: 9px/14px "Liberation Mono", monospace; color: #888; }
.status > button:not(.tool):not(.drop) { height: 16px; line-height: 14px; border: 1px solid #fafafa; border-right-color: #aaa; border-bottom-color: #aaa; white-space: nowrap; }
.status > .on:not(.tool):not(.drop) { border-color: #444 #fff #fff #444; background: #f5f3f2; }
.status .mono { font: 9px "Liberation Mono", monospace; }
.tray { margin-left: auto; display: flex; gap: 3px; padding: 0 1px; border: 1px solid #bbb; border-color: #bbb #fff #fff #bbb; }
.drop { margin-top: 4px; border: 4px solid transparent; border-top-color: #111; border-bottom: 0; }
.status .tool { width: 18px; }
.sizer { width: 10px; height: 12px; align-self: flex-end; }

.balloon { position: absolute; right: 41px; bottom: 33px; width: 193px; height: 66px; padding: 4px 6px 0 13px; border: 1px solid #111; border-radius: 13px; background: #ffffe1; font-size: 11px; white-space: nowrap; }
.balloon header { display: flex; align-items: center; gap: 8px; height: 20px; margin-left: -5px; }
.balloon header > .i { width: 14px; height: 14px; }
.balloon h2 { flex: 1; font-size: 12px; font-weight: bold; }
.balloon header button { width: 14px; height: 14px; display: grid; place-items: center; border: 1px solid #888; background: #f7f7f0; }
.balloon header button .i { width: 12px; height: 12px; }
.balloon p { height: 17px; line-height: 17px; }
.balloon a { display: block; line-height: 16px; color: #0000e8; }
.tail { position: absolute; left: 134px; top: 64px; width: 20px; height: 20px; }
.mark { position: absolute; right: 47px; bottom: 16px; width: 184px; height: 90px; pointer-events: none; fill: #fff; fill-opacity: .6; stroke: #aaa; stroke-opacity: .4; stroke-width: 1; }
.big { font: bold 34px "Liberation Sans", sans-serif; }
.cnm { font: bold 30px "Noto Sans CJK SC", sans-serif; }
.url { font: 21px "Liberation Sans", sans-serif; }
.pet { position: absolute; right: -2px; bottom: 82px; width: 14px; height: 32px; fill: none; }
```
